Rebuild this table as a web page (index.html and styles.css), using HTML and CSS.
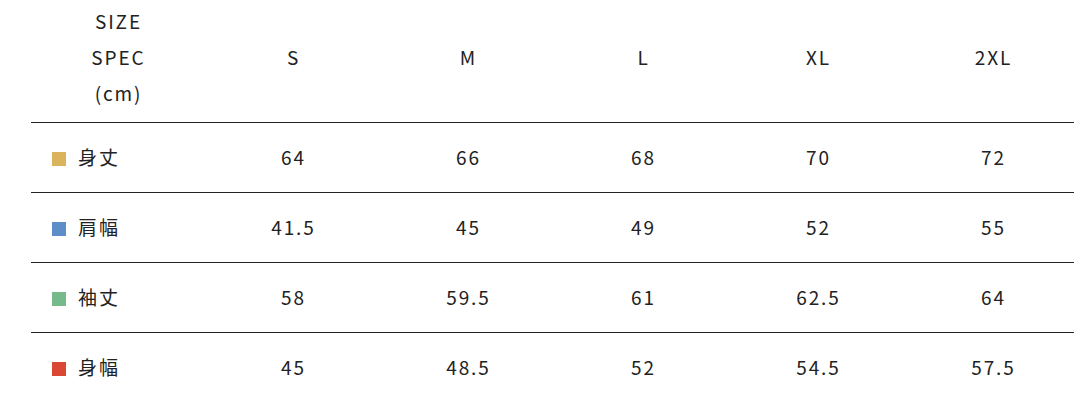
FILE: index.html
```html
<!DOCTYPE html>
<html lang="ja">
<head>
<meta charset="utf-8">
<link rel="stylesheet" href="styles.css">
</head>
<body>
<table class="size-table">
  <thead>
    <tr>
      <th class="spec">SIZE<br>SPEC<br>(cm)</th>
      <th>S</th>
      <th>M</th>
      <th>L</th>
      <th>XL</th>
      <th>2XL</th>
    </tr>
  </thead>
  <tbody>
    <tr>
      <td class="label"><span class="sq sq-gold"></span>身丈</td>
      <td>64</td><td>66</td><td>68</td><td>70</td><td>72</td>
    </tr>
    <tr>
      <td class="label"><span class="sq sq-blue"></span>肩幅</td>
      <td>41.5</td><td>45</td><td>49</td><td>52</td><td>55</td>
    </tr>
    <tr>
      <td class="label"><span class="sq sq-green"></span>袖丈</td>
      <td>58</td><td>59.5</td><td>61</td><td>62.5</td><td>64</td>
    </tr>
    <tr>
      <td class="label"><span class="sq sq-red"></span>身幅</td>
      <td>45</td><td>48.5</td><td>52</td><td>54.5</td><td>57.5</td>
    </tr>
  </tbody>
</table>
</body>
</html>
```

FILE: styles.css
```css
html, body {
  margin: 0;
  padding: 0;
  background: #ffffff;
}
body {
  font-family: "Noto Sans CJK JP", "Noto Sans", sans-serif;
  color: #222222;
  overflow: hidden;
}
.size-table {
  margin-left: 31px;
  width: 1050px;
  border-collapse: collapse;
  table-layout: fixed;
  font-size: 19px;
  letter-spacing: 0.1em;
}
.size-table th {
  font-weight: 400;
  text-align: center;
  height: 122px;
  padding: 0 0 8px 0;
  box-sizing: border-box;
  line-height: 36px;
  vertical-align: middle;
  border-bottom: 1px solid #222222;
}
.size-table td {
  height: 67px;
  padding: 0 0 2px 0;
  text-align: center;
  vertical-align: middle;
  border-top: 1px solid #222222;
}
.size-table thead + tbody tr:first-child td {
  border-top: none;
}
.size-table td.label {
  text-align: left;
  padding-left: 21px;
}
.sq {
  display: inline-block;
  width: 14px;
  height: 14px;
  margin-right: 12px;
  vertical-align: -1px;
}
.label-text {
  letter-spacing: 0.15em;
}
.sq-gold { background: #dbb35c; }
.sq-blue { background: #5d8ec8; }
.sq-green { background: #76b98b; }
.sq-red { background: #da4834; }
```
